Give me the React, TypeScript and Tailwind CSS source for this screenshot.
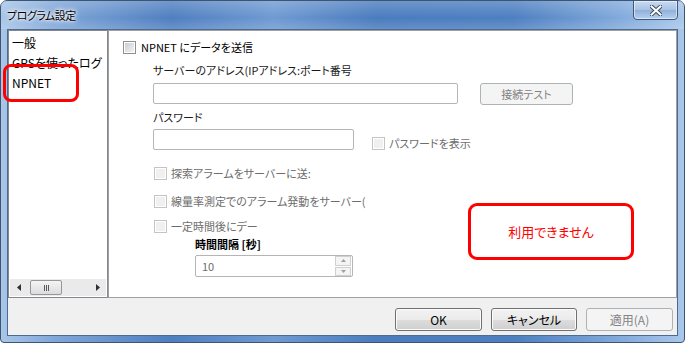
import React from 'react';

const font = "font-['Noto_Sans_CJK_JP','Noto_Sans',sans-serif] [font-feature-settings:'palt']";

function Check({ disabled }: { disabled?: boolean }) {
  return (
    <span
      className={`flex items-center justify-center w-[13px] h-[13px] shrink-0 border ${
        disabled ? 'border-[#c4c4c4] bg-white' : 'border-[#8e8f8f] bg-white'
      }`}
    >
      <span
        className={`w-[9px] h-[9px] ${
          disabled
            ? 'bg-[#f0f0f0]'
            : 'bg-[linear-gradient(135deg,#c9ccd1,#f4f4f4)]'
        }`}
      />
    </span>
  );
}

function Button({ label, disabled, className = '' }: { label: string; disabled?: boolean; className?: string }) {
  return (
    <div
      className={`flex items-center justify-center rounded-[3px] border leading-none ${
        disabled
          ? 'border-[#adb2b5] bg-[#f4f4f4] text-[#838383]'
          : 'border-[#707070] bg-[linear-gradient(#f2f2f2_0%,#ebebeb_50%,#dddddd_51%,#cfcfcf_100%)] shadow-[inset_0_0_0_1px_#fbfbfb] text-black'
      } ${className}`}
    >
      {label}
    </div>
  );
}

export default function App() {
  return (
    <div className={`relative w-[685px] h-[343px] overflow-hidden bg-white ${font} text-[11px]`}>
      {/* Window frame */}
      <div className="flex flex-col w-full h-full rounded-t-[7px] rounded-b-[4px] border border-[#3b5573] bg-[linear-gradient(90deg,#a9c6e8_0%,#7fa6d8_8%,#4f7fc0_25%,#6f9ad2_40%,#4a7cbe_55%,#4d7fc1_75%,#7fa8da_90%,#a9c7ea_100%)]">
        {/* Title bar */}
        <div className="relative h-[28px] shrink-0 flex items-center pl-[6px] bg-[linear-gradient(180deg,rgba(255,255,255,0.2)_0%,rgba(255,255,255,0)_60%,rgba(255,255,255,0.15)_100%)]">
          <span className="text-[11px] tracking-[-0.5px] text-black [text-shadow:0_0_6px_#ffffff,0_0_4px_#ffffff,0_0_2px_#ffffff]">プログラム設定</span>
          <div className="absolute right-[6px] top-[-1px] w-[45px] h-[20px] rounded-b-[4px] border border-[#40597a] bg-[linear-gradient(180deg,#c9dbf0_0%,#a7c2e4_50%,#8fb0da_51%,#b7cfee_100%)] shadow-[inset_0_0_0_1px_rgba(255,255,255,0.5)] flex items-center justify-center">
            <svg width="12" height="11" viewBox="0 0 12 11">
              <path d="M1.5 1.5 L10.5 9.5 M10.5 1.5 L1.5 9.5" stroke="#3d4a5c" strokeWidth="4" strokeLinecap="square" />
              <path d="M1.5 1.5 L10.5 9.5 M10.5 1.5 L1.5 9.5" stroke="#ffffff" strokeWidth="2" strokeLinecap="square" />
            </svg>
          </div>
        </div>

        {/* Client area */}
        <div className="flex flex-col flex-1 mx-[6px] mb-[6px] border border-[#4d6a8f] bg-[#f0f0f0]">
          <div className="flex h-[268px] shrink-0">
            {/* Left list */}
            <div className="w-[100px] flex flex-col bg-white border border-[#828790]">
              <div className="flex-1 flex flex-col pl-[3px] pt-[2px] leading-[20px] text-[12px] text-black overflow-hidden whitespace-nowrap">
                <div>一般</div>
                <div>GPSを使ったログ</div>
                <div>NPNET</div>
              </div>
              <div className="h-[17px] mb-[1px] mx-[1px] flex items-center bg-[#eaeaea]">
                <div className="w-[17px] flex justify-center">
                  <svg width="4" height="7" viewBox="0 0 4 7"><path d="M4 0 L0 3.5 L4 7 Z" fill="#303030" /></svg>
                </div>
                <div className="ml-[3px] w-[32px] h-[15px] rounded-[2px] border border-[#979797] bg-[linear-gradient(#f4f4f4,#dcdcdc)] flex items-center justify-center gap-[1px]">
                  <span className="w-[1px] h-[6px] bg-[#5a5a5a]" />
                  <span className="w-[1px] h-[6px] bg-[#5a5a5a]" />
                  <span className="w-[1px] h-[6px] bg-[#5a5a5a]" />
                </div>
                <div className="flex-1" />
                <div className="w-[17px] flex justify-center">
                  <svg width="4" height="7" viewBox="0 0 4 7"><path d="M0 0 L4 3.5 L0 7 Z" fill="#303030" /></svg>
                </div>
              </div>
            </div>

            {/* Right panel */}
            <div className="flex-1 bg-white border border-[#a0a0a0] pl-[14px] pt-[9px] leading-[14px] text-black">
              <div className="flex items-center gap-[5px] h-[14px]">
                <Check />
                <span>NPNET にデータを送信</span>
              </div>

              <div className="ml-[30px]">
                <div className="mt-[9px] whitespace-nowrap text-[#1a1a1a]">サーバーのアドレス(IPアドレス:ポート番号</div>
                <div className="mt-[6px] flex items-start">
                  <div className="w-[305px] h-[21px] rounded-[2px] border border-[#b5b5b5] bg-white" />
                  <Button label="接続テスト" disabled className="ml-[22px] w-[93px] h-[22px]" />
                </div>
                <div className="mt-[5px] text-[#1a1a1a]">パスワード</div>
                <div className="mt-[5px] flex items-start">
                  <div className="w-[201px] h-[21px] rounded-[2px] border border-[#b5b5b5] bg-white" />
                  <div className="ml-[18px] mt-[7px] flex items-center gap-[4px] text-[#6d6d6d]">
                    <Check disabled />
                    <span>パスワードを表示</span>
                  </div>
                </div>

                <div className="ml-[1px] mt-[16px] flex items-center gap-[4px] text-[#6d6d6d]">
                  <Check disabled />
                  <span className="whitespace-nowrap">探索アラームをサーバーに送:</span>
                </div>
                <div className="ml-[1px] mt-[14px] flex items-center gap-[4px] text-[#6d6d6d]">
                  <Check disabled />
                  <span className="whitespace-nowrap">線量率測定でのアラーム発動をサーバー(</span>
                </div>
                <div className="ml-[1px] mt-[11px] flex items-center gap-[4px] text-[#6d6d6d]">
                  <Check disabled />
                  <span className="whitespace-nowrap">一定時間後にデー</span>
                </div>

                <div className="ml-[42px] mt-[4px] font-bold">時間間隔 [秒]</div>
                <div className="ml-[42px] mt-[4px] w-[158px] h-[22px] flex items-center rounded-[2px] border border-[#b5b5b5] bg-white">
                  <span className="flex-1 pl-[6px] text-[#6d6d6d]">10</span>
                  <div className="w-[16px] h-[20px] mr-[1px] flex flex-col gap-[1px]">
                    <div className="flex-1 flex items-center justify-center border border-[#d0d0d0] bg-[#f4f4f4]">
                      <svg width="5" height="3" viewBox="0 0 5 3"><path d="M0 3 L2.5 0 L5 3 Z" fill="#a0a0a0" /></svg>
                    </div>
                    <div className="flex-1 flex items-center justify-center border border-[#d0d0d0] bg-[#f4f4f4]">
                      <svg width="5" height="3" viewBox="0 0 5 3"><path d="M0 0 L2.5 3 L5 0 Z" fill="#a0a0a0" /></svg>
                    </div>
                  </div>
                </div>
              </div>
            </div>
          </div>

          {/* Bottom buttons */}
          <div className="flex-1 flex justify-end items-start pt-[10px] pr-[4px] gap-[9px] text-[12px]">
            <Button label="OK" className="w-[87px] h-[23px]" />
            <Button label="キャンセル" className="w-[86px] h-[23px]" />
            <Button label="適用(A)" disabled className="w-[87px] h-[23px]" />
          </div>
        </div>
      </div>

      {/* Annotations */}
      <div className="absolute left-[3px] top-[64px] w-[76px] h-[38px] rounded-[8px] border-[3px] border-[#ff0000]" />
      <div className="absolute left-[468px] top-[203px] w-[166px] h-[57px] rounded-[9px] border-[3px] border-[#ff0000] bg-white flex items-center justify-center text-[#ff0000] text-[13px]">
        利用できません
      </div>
    </div>
  );
}
